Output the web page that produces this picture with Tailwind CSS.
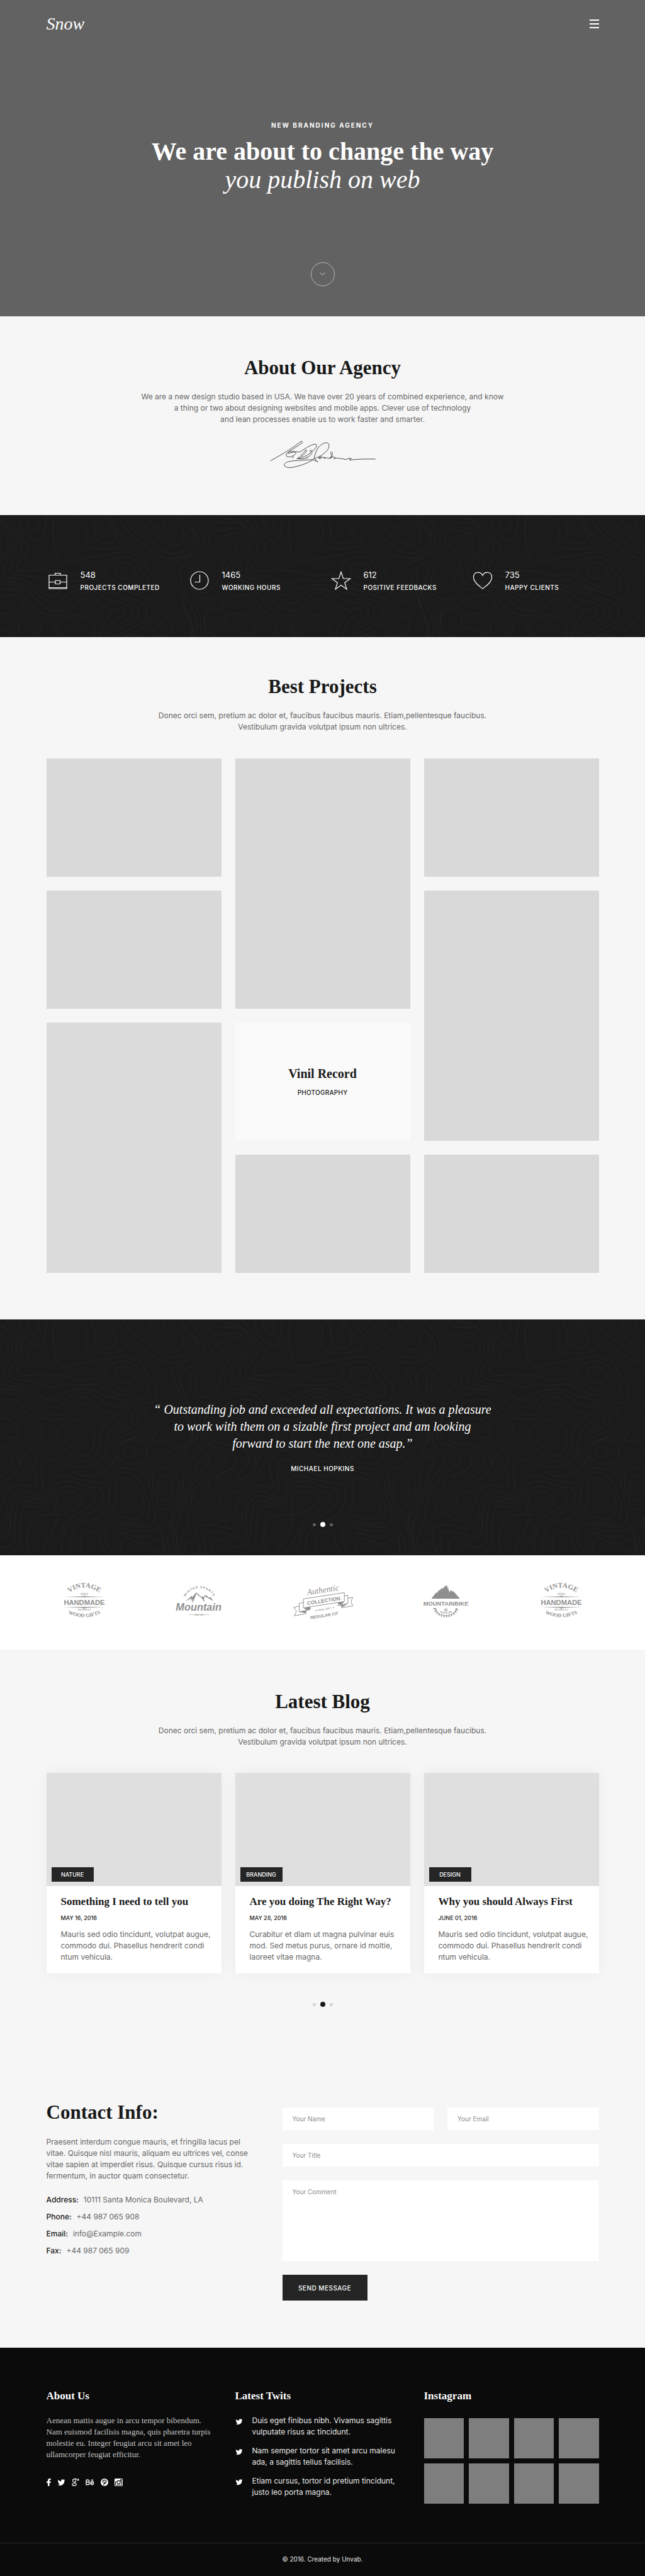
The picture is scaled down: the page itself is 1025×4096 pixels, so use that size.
<!DOCTYPE html>
<html lang="en">
<head>
<meta charset="utf-8">
<meta name="viewport" content="width=device-width, initial-scale=1">
<title>Snow – New Branding Agency</title>
<script src="https://cdn.jsdelivr.net/npm/@tailwindcss/browser@4"></script>
</head>
<body class="bg-[#f6f6f6] font-[Inter,sans-serif] text-xs leading-[18px] text-[#666]">

<!-- Contour-line texture and client logos shared by several sections -->
<svg class="absolute size-0" aria-hidden="true">
  <defs>
    <pattern id="topo" width="375" height="375" patternUnits="userSpaceOnUse" patternTransform="translate(188 0)">
      <g id="contours" transform="scale(.25)" fill="none" stroke="#262626" stroke-width="3"></g>
    </pattern>
    <symbol id="logo-handmade" viewBox="0 0 90 86">
      <path id="arc-top" d="M8 26Q45-4 82 26" fill="none"/>
      <path id="arc-bottom" d="M9 66Q45 83 81 66" fill="none"/>
      <g fill="#8f8f8f" text-anchor="middle" font-family="Liberation Serif, serif" font-weight="700">
        <text font-size="15"><textPath href="#arc-top" startOffset="50%">VINTAGE</textPath></text>
        <text x="45" y="27" font-size="5">· STYLE ·</text>
        <text x="45" y="48" font-size="15" font-family="Liberation Sans, sans-serif">HANDMADE</text>
        <text x="45" y="61" font-size="4">EST. 1978 U.S.A</text>
        <text font-size="11"><textPath href="#arc-bottom" startOffset="50%">WOOD GIFTS</textPath></text>
      </g>
      <path d="M1 31 45 30 89 31 45 32zM1 53.500 45 52.500 89 53.500 45 54.500z" fill="#8f8f8f"/>
      <path d="M41 30.500 45 28.500 49 30.500M41 54 45 56 49 54" fill="none" stroke="#8f8f8f"/>
    </symbol>
  </defs>
</svg>

<section class="bg-[#626262] px-[73px] pt-5 pb-12 text-white">
  <header class="mx-auto flex h-9 max-w-[878px] items-center justify-between">
    <a href="#" class="font-['Liberation_Serif',serif] text-[28px] leading-9 italic">Snow</a>
    <button type="button" aria-label="Menu" class="flex w-[15px] flex-col gap-1">
      <span class="h-0.5 bg-white"></span><span class="h-0.5 bg-white"></span><span class="h-0.5 bg-white"></span>
    </button>
  </header>
  <div class="mt-[135px] text-center">
    <p class="text-[10px] leading-4 font-bold tracking-[2px]">NEW BRANDING AGENCY</p>
    <h1 class="mt-[11px] font-['Liberation_Serif',serif] text-[40px] leading-[45px] font-bold">We are about to change the way<br><em class="font-normal">you publish on web</em></h1>
    <a href="#about" aria-label="Scroll down" class="mx-auto mt-[109px] flex size-[38px] items-center justify-center rounded-full border border-[#b5b5b5]">
      <svg class="h-[6px] w-[9px]" viewBox="0 0 9 6" fill="none" stroke="#ccc"><path d="M.5.5 4.500 4.500 8.500.5"/></svg>
    </a>
  </div>
</section>

<section id="about" class="px-[73px] pt-[62px] pb-[68px] text-center">
  <h2 class="font-['Liberation_Serif',serif] text-[31px] leading-10 font-bold text-[#191919]">About Our Agency</h2>
  <p class="mt-[17px]">We are a new design studio based in USA. We have over 20 years of combined experience, and know<br>a thing or two about designing websites and mobile apps. Clever use of technology<br>and lean processes enable us to work faster and smarter.</p>
  <svg class="mx-auto mt-[18px] h-[57px] w-[185px]" viewBox="0 0 738 228" fill="none" stroke="#111" stroke-width="3" stroke-linecap="round" stroke-linejoin="round">
    <path d="M40 154 96 122C150 90 195 60 228 35C246 22 242 42 230 48C190 78 152 92 140 112C130 134 160 134 184 122C212 106 200 96 176 101C158 104 150 112 150 104C150 92 186 94 222 100C260 78 300 46 326 50C344 56 320 84 290 106C268 124 240 136 206 142M184 128 178 138M262 86C244 110 226 130 212 138C240 150 280 140 304 104M264 88C280 84 254 112 236 128M296 84C282 92 292 102 304 90M274 130 268 138M338 162C324 152 310 148 290 148C240 152 150 152 132 170C110 192 150 206 200 192C250 180 290 162 316 140C322 100 340 60 376 44C420 26 416 70 396 92C370 118 346 132 318 140L338 162"/>
    <path d="M344 138C350 120 372 134 356 142C344 146 342 130 368 132L386 134 380 142C392 132 398 134 404 140C420 136 436 118 432 102C426 92 412 104 426 118C436 124 428 138 416 140C420 130 436 128 450 134L442 142C460 134 478 138 480 142L496 140C500 144 510 146 520 146C530 140 538 138 552 140L540 150C570 146 640 142 704 144"/>
  </svg>
</section>

<section class="relative bg-[#1b1b1b] px-[73px] pt-[85px] pb-[71px] text-white">
  <svg class="absolute inset-0 size-full" aria-hidden="true"><rect width="100%" height="100%" fill="url(#topo)"/></svg>
  <div class="relative mx-auto grid max-w-[878px] grid-cols-4 gap-[22px]">
    <div class="flex items-center gap-[18px]">
      <svg class="size-9 shrink-0" viewBox="0 0 36 36" fill="none" stroke="#fff" stroke-width="1.200"><path d="M4 9.500H32V31H4zM13.500 9.500V6.500H22V9.500M4 20.500H14M22 20.500H32M14 18H21.500V23.500H14zM4 29.500H32"/></svg>
      <div><p class="text-[13px] leading-5">548</p><p class="mt-0.5 text-[10px] leading-4 font-medium tracking-[0.5px] whitespace-nowrap">PROJECTS COMPLETED</p></div>
    </div>
    <div class="flex items-center gap-[18px]">
      <svg class="size-9 shrink-0" viewBox="0 0 36 36" fill="none" stroke="#fff" stroke-width="1.200"><circle cx="18" cy="18" r="14"/><path d="M18.500 9V20.500H10.500"/></svg>
      <div><p class="text-[13px] leading-5">1465</p><p class="mt-0.5 text-[10px] leading-4 font-medium tracking-[0.5px] whitespace-nowrap">WORKING HOURS</p></div>
    </div>
    <div class="flex items-center gap-[18px]">
      <svg class="size-9 shrink-0" viewBox="0 0 36 36" fill="none" stroke="#fff" stroke-width="1.200"><path d="M18 4.500 21.500 15H32.500L23.800 21.500 27 32 18 25.500 9 32 12.200 21.500 3.500 15H14.500z"/></svg>
      <div><p class="text-[13px] leading-5">612</p><p class="mt-0.5 text-[10px] leading-4 font-medium tracking-[0.5px] whitespace-nowrap">POSITIVE FEEDBACKS</p></div>
    </div>
    <div class="flex items-center gap-[18px]">
      <svg class="size-9 shrink-0" viewBox="0 0 36 36" fill="none" stroke="#fff" stroke-width="1.200"><path d="M18 31C13 27 3.500 21 3.500 12.500C3.500 4 14.500 2.500 18 10C21.500 2.500 32.500 4 32.500 12.500C32.500 21 23 27 18 31z"/></svg>
      <div><p class="text-[13px] leading-5">735</p><p class="mt-0.5 text-[10px] leading-4 font-medium tracking-[0.5px] whitespace-nowrap">HAPPY CLIENTS</p></div>
    </div>
  </div>
</section>

<section class="px-[73px] pt-[59px] pb-[74px] text-center">
  <h2 class="font-['Liberation_Serif',serif] text-[31px] leading-10 font-bold text-[#191919]">Best Projects</h2>
  <p class="mt-[17px]">Donec orci sem, pretium ac dolor et, faucibus faucibus mauris. Etiam,pellentesque faucibus.<br>Vestibulum gravida volutpat ipsum non ultrices.</p>
  <div class="mx-auto mt-[41px] grid max-w-[878px] grid-flow-col grid-cols-3 grid-rows-[repeat(4,188px)] gap-[22px]">
    <div class="bg-[#d9d9d9]"></div>
    <div class="bg-[#d9d9d9]"></div>
    <div class="row-span-2 bg-[#dbdbdb]"></div>
    <div class="row-span-2 bg-[#d9d9d9]"></div>
    <a href="#" class="flex flex-col items-center justify-center bg-[#fafafa] text-[#191919]">
      <h3 class="font-['Liberation_Serif',serif] text-xl leading-6 font-bold">Vinil Record</h3>
      <p class="mt-2.5 text-[10px] leading-4 font-medium tracking-wide">PHOTOGRAPHY</p>
    </a>
    <div class="bg-[#d9d9d9]"></div>
    <div class="bg-[#d9d9d9]"></div>
    <div class="row-span-2 bg-[#d9d9d9]"></div>
    <div class="bg-[#d9d9d9]"></div>
  </div>
</section>

<section class="relative bg-[#1b1b1b] px-[73px] pt-[130px] pb-[45px] text-center text-white">
  <svg class="absolute inset-0 size-full" aria-hidden="true"><rect width="100%" height="100%" fill="url(#topo)"/></svg>
  <div class="relative">
    <blockquote class="font-['Liberation_Serif',serif] text-xl leading-[27px] italic">“ Outstanding job and exceeded all expectations. It was a pleasure<br>to work with them on a sizable first project and am looking<br>forward to start the next one asap.”</blockquote>
    <p class="mt-[18px] text-[10px] leading-4 font-medium tracking-[0.5px]">MICHAEL HOPKINS</p>
    <div class="mt-[77px] flex items-center justify-center gap-[7px]">
      <button type="button" aria-label="Testimonial 1" class="size-[5px] rounded-full bg-[#606060]"></button>
      <button type="button" aria-label="Testimonial 2" class="size-2 rounded-full bg-white"></button>
      <button type="button" aria-label="Testimonial 3" class="size-[5px] rounded-full bg-[#606060]"></button>
    </div>
  </div>
</section>

<section class="bg-white px-[73px] py-[43px]">
  <div class="mx-auto flex max-w-[878px] items-center justify-between px-[26px]">
    <svg class="h-16 w-[68px]" viewBox="0 0 90 86" role="img" aria-label="Vintage Handmade"><use href="#logo-handmade"/></svg>
    <svg class="h-16 w-[76px]" viewBox="7 0 101 86" fill="#8f8f8f" role="img" aria-label="Mountain">
      <path id="arc-winter" d="M27 35A34 34 0 0 1 91 35" fill="none"/>
      <text font-family="Liberation Sans, sans-serif" font-weight="700" font-size="6.500" letter-spacing="1.500" text-anchor="middle"><textPath href="#arc-winter" startOffset="50%">WINTER SPORTS</textPath></text>
      <path d="M28 41 40 31 41 28 43 32 52 22 65 33 63 28 67 32 72 27 80 33 83 32 88 40 78 34 71 30 68 35 70 43 63 33 52 25 48 35 44 44 43 35 40 40 41 34z"/>
      <text x="57" y="61" font-family="Liberation Sans, sans-serif" font-weight="700" font-style="italic" font-size="22" text-anchor="middle">Mountain</text>
      <text x="58" y="71" font-family="Liberation Sans, sans-serif" font-weight="700" font-size="3.500" text-anchor="middle">SINCE 1914</text>
      <path d="M36 69H48V70H36zM68 69H80V70H68z" opacity=".6"/>
    </svg>
    <svg class="h-16 w-24 overflow-visible" viewBox="4 0 128 86" fill="#8f8f8f" role="img" aria-label="Authentic Collection">
      <g fill="#fff" stroke="#8f8f8f" stroke-width="1.300" stroke-linejoin="round">
        <path d="M17 51 6 53.500 12 62 7 71.500 32 67V50zM122 34 132 32 128 41 132 50.500 108 54V40z"/>
        <path d="M26 43 17.500 45V63L41 58V47zM114 29 121.500 27.500V45L101 50V42z"/>
        <path d="M26.500 35.500 114 22V41L26.500 54.500z"/>
      </g>
      <path d="M27 55 41 52.500V58L35 60zM18 63.500 32 60V66zM101 43 114 41 107 49 100 45zM108 49 121 46 108 54z"/>
      <g font-family="Liberation Sans, sans-serif" font-weight="700" text-anchor="middle">
        <text transform="translate(69 22) rotate(-8.500)" font-family="Liberation Serif, serif" font-weight="400" font-style="italic" font-size="18">Authentic</text>
        <text transform="translate(70.500 43) rotate(-8.500)" font-size="11">COLLECTION</text>
        <text transform="translate(72 59) rotate(-8.500)" font-family="Liberation Serif, serif" font-style="italic" font-size="6">Since 1937</text>
        <text transform="translate(71.500 74) rotate(-8.500)" font-size="9">REGULAR FIT</text>
      </g>
      <path d="M51 61.500 56 58 55 61zM89 53 94 55 90 55z"/>
    </svg>
    <svg class="h-16 w-[76px]" viewBox="3 0 101 86" fill="#8f8f8f" role="img" aria-label="Mountainbike">
      <path d="M22 35 32 22 34 23 38 16 39 18 44 12 45 14 53.600 6.500 60 13 66 18 70 20 76 27 83 35z"/>
      <path d="M54.500 9 58 14 61 22 63 16 69 22 64 15 60 13z" fill="#fff"/>
      <text x="53" y="50" font-family="Liberation Sans, sans-serif" font-weight="700" font-size="12.500" text-anchor="middle">MOUNTAINBIKE</text>
      <path d="M29 55A25 22 0 0 0 77 55L74 55A21 15 0 0 1 32 55z"/>
      <path d="M28 55A25.500 22 0 0 0 78 55" fill="none" stroke="#8f8f8f" stroke-width="4" stroke-dasharray="2.500 3"/>
      <circle cx="53" cy="59" r="2.500" fill="none" stroke="#8f8f8f" stroke-width="1.500"/>
      <path id="arc-adventure" d="M39 63Q53 71 67 63" fill="none"/>
      <text font-family="Liberation Sans, sans-serif" font-weight="700" font-size="4.500" text-anchor="middle"><textPath href="#arc-adventure" startOffset="50%">ADVENTURE</textPath></text>
    </svg>
    <svg class="h-16 w-[68px]" viewBox="0 0 90 86" role="img" aria-label="Vintage Handmade"><use href="#logo-handmade"/></svg>
  </div>
</section>

<section class="px-[73px] pt-[63px]">
  <div class="text-center">
    <h2 class="font-['Liberation_Serif',serif] text-[31px] leading-10 font-bold text-[#191919]">Latest Blog</h2>
    <p class="mt-[17px]">Donec orci sem, pretium ac dolor et, faucibus faucibus mauris. Etiam,pellentesque faucibus.<br>Vestibulum gravida volutpat ipsum non ultrices.</p>
  </div>
  <div class="mx-auto mt-10 grid max-w-[878px] grid-cols-3 gap-[22px]">
    <article class="bg-white shadow-[0_0_20px_rgba(0,0,0,0.05)]">
      <div class="flex h-[180px] items-end bg-[#dfdfdf] px-2 pb-[7px]"><a href="#" class="w-[67px] bg-[#252525] text-center text-[9px] leading-[23px] font-medium text-white">NATURE</a></div>
      <div class="px-[23px] pt-[13px] pb-[17px] whitespace-nowrap">
        <h3 class="font-['Liberation_Serif',serif] text-[17px] leading-6 font-bold text-[#191919]">Something I need to tell you</h3>
        <p class="mt-[7px] text-[9px] leading-[14px] font-medium text-[#191919]">MAY 16, 2016</p>
        <p class="mt-2.5">Mauris sed odio tincidunt, volutpat augue,<br>commodo dui. Phasellus hendrerit condi<br>ntum vehicula.</p>
      </div>
    </article>
    <article class="bg-white shadow-[0_0_20px_rgba(0,0,0,0.05)]">
      <div class="flex h-[180px] items-end bg-[#dfdfdf] px-2 pb-[7px]"><a href="#" class="w-[67px] bg-[#252525] text-center text-[9px] leading-[23px] font-medium text-white">BRANDING</a></div>
      <div class="px-[23px] pt-[13px] pb-[17px] whitespace-nowrap">
        <h3 class="font-['Liberation_Serif',serif] text-[17px] leading-6 font-bold text-[#191919]">Are you doing The Right Way?</h3>
        <p class="mt-[7px] text-[9px] leading-[14px] font-medium text-[#191919]">MAY 28, 2016</p>
        <p class="mt-2.5">Curabitur et diam ut magna pulvinar euis<br>mod. Sed metus purus, ornare id moltie,<br>laoreet vitae magna.</p>
      </div>
    </article>
    <article class="bg-white shadow-[0_0_20px_rgba(0,0,0,0.05)]">
      <div class="flex h-[180px] items-end bg-[#dfdfdf] px-2 pb-[7px]"><a href="#" class="w-[67px] bg-[#252525] text-center text-[9px] leading-[23px] font-medium text-white">DESIGN</a></div>
      <div class="px-[23px] pt-[13px] pb-[17px] whitespace-nowrap">
        <h3 class="font-['Liberation_Serif',serif] text-[17px] leading-6 font-bold text-[#191919]">Why you should Always First</h3>
        <p class="mt-[7px] text-[9px] leading-[14px] font-medium text-[#191919]">JUNE 01, 2016</p>
        <p class="mt-2.5">Mauris sed odio tincidunt, volutpat augue,<br>commodo dui. Phasellus hendrerit condi<br>ntum vehicula.</p>
      </div>
    </article>
  </div>
  <div class="mt-[45px] flex items-center justify-center gap-[7px]">
    <button type="button" aria-label="Blog page 1" class="size-[5px] rounded-full bg-[#d3d3d3]"></button>
    <button type="button" aria-label="Blog page 2" class="size-2 rounded-full bg-[#191919]"></button>
    <button type="button" aria-label="Blog page 3" class="size-[5px] rounded-full bg-[#d3d3d3]"></button>
  </div>
</section>

<section class="px-[73px] pt-[148px] pb-[75px]">
  <div class="mx-auto grid max-w-[878px] grid-cols-12 gap-[22px]">
    <div class="col-span-5">
      <h2 class="font-['Liberation_Serif',serif] text-[31px] leading-10 font-bold text-[#191919]">Contact Info:</h2>
      <p class="mt-[18px] whitespace-nowrap">Praesent interdum congue mauris, et fringilla lacus pel<br>vitae. Quisque nisl mauris, aliquam eu ultrices vel, conse<br>vitae sapien at imperdiet risus. Quisque cursus risus id.<br>fermentum, in auctor quam consectetur.</p>
      <dl class="mt-5 flex flex-col gap-[9px]">
        <div class="flex gap-2"><dt class="font-medium text-[#191919]">Address:</dt><dd>10111 Santa Monica Boulevard, LA</dd></div>
        <div class="flex gap-2"><dt class="font-medium text-[#191919]">Phone:</dt><dd>+44 987 065 908</dd></div>
        <div class="flex gap-2"><dt class="font-medium text-[#191919]">Email:</dt><dd>info@Example.com</dd></div>
        <div class="flex gap-2"><dt class="font-medium text-[#191919]">Fax:</dt><dd>+44 987 065 909</dd></div>
      </dl>
    </div>
    <form class="col-span-7 grid grid-cols-2 gap-[22px] pt-3 text-[10px] text-[#555]">
      <input type="text" aria-label="Your Name" placeholder="Your Name" class="h-9 w-full bg-white px-4 placeholder:text-[#8c8c8c]">
      <input type="email" aria-label="Your Email" placeholder="Your Email" class="h-9 w-full bg-white px-4 placeholder:text-[#8c8c8c]">
      <input type="text" aria-label="Your Title" placeholder="Your Title" class="col-span-2 h-9 w-full bg-white px-4 placeholder:text-[#8c8c8c]">
      <textarea aria-label="Your Comment" placeholder="Your Comment" class="col-span-2 h-32 w-full resize-none bg-white px-4 py-[9px] placeholder:text-[#8c8c8c]"></textarea>
      <div class="col-span-2"><button type="submit" class="block h-[41px] w-[135px] bg-[#252525] text-[10px] font-medium tracking-[0.5px] text-white">SEND MESSAGE</button></div>
    </form>
  </div>
</section>

<footer class="bg-[#0b0b0b] text-[#e8e8e8]">
  <div class="px-[73px] pt-[65px] pb-[62px]">
    <div class="mx-auto grid max-w-[878px] grid-cols-3 gap-[22px]">
      <div>
        <h3 class="font-['Liberation_Serif',serif] text-[17px] leading-6 font-bold text-white">About Us</h3>
        <p class="mt-[18px] font-['Liberation_Serif',serif] text-[13px] whitespace-nowrap text-[#c4c4c4]">Aenean mattis augue in arcu tempor bibendum.<br>Nam euismod facilisis magna, quis pharetra turpis<br>molestie eu. Integer feugiat arcu sit amet leo<br>ullamcorper feugiat efficitur.</p>
        <div class="mt-[29px] flex items-center gap-2.5 text-white">
          <a href="#" aria-label="Facebook"><svg class="h-3 w-[7px]" viewBox="0 0 7 12" fill="currentColor"><path d="M2 12V7H0V4.500H2V3C2 1 3.200 0 5 0H6.800V2.300H5.500C4.700 2.300 4.500 2.700 4.500 3.300V4.500H6.800L6.400 7H4.500V12z"/></svg></a>
          <a href="#" aria-label="Twitter"><svg class="h-3 w-[13px]" viewBox="0 0 24 24" fill="currentColor"><path d="M23.600 5a10 10 0 0 1-2.700.8 4.800 4.800 0 0 0 2.100-2.600c-.9.500-2 1-3.100 1.200a4.800 4.800 0 0 0-8.300 4.400C7.700 8.600 4.200 6.700 1.800 3.800a4.900 4.900 0 0 0 1.500 6.500c-.8 0-1.500-.2-2.200-.6 0 2.400 1.600 4.400 3.900 4.900-.7.200-1.500.2-2.200.1.600 1.900 2.400 3.300 4.500 3.400A9.800 9.800 0 0 1 .2 20.100a13.800 13.800 0 0 0 21.200-12.200c1-.7 1.700-1.600 2.200-2.900z"/></svg></a>
          <a href="#" aria-label="Google Plus"><svg class="h-3 w-3" viewBox="0 0 12 12" fill="none" stroke="currentColor" stroke-width="1.100"><path d="M8 .6H4.500C2.800.6 1.600 1.800 1.600 3.300C1.600 4.800 2.600 5.700 4 5.700C5.600 5.700 6.400 4.600 6.400 3.200C6.400 1.800 5.400 1 4.800.7M4.500 5.800C4 6.600 7.300 7.100 7.300 9.100C7.300 10.600 6 11.400 4 11.400C2 11.400.8 10.600.8 9.400C.8 8 2.500 7.400 4.800 7.500M10 0V4M8 2H12"/></svg></a>
          <a href="#" aria-label="Behance"><svg class="h-3 w-[14px]" viewBox="0 0 14 12" fill="none" stroke="currentColor" stroke-width="1.400"><path d="M1 2.200H4C6.300 2.200 6.300 5.800 4 5.800H1M4 5.800C6.900 5.800 6.900 9.800 4 9.800H1V2.200M8.200 7.400H12.600C12.600 3.800 8.200 3.800 8.200 7.300C8.200 10.500 12 10.600 12.700 8.600M8.700 2.500H12.200"/></svg></a>
          <a href="#" aria-label="Pinterest"><svg class="h-3 w-3" viewBox="0 0 12 12"><circle cx="6" cy="6" r="6" fill="currentColor"/><path d="M4.700 10.800 6.100 5M3.800 6.600C2.300 3.800 4 2.300 6.100 2.300C8.100 2.300 9 3.600 8.700 5.300C8.400 7.400 6.500 8.200 5.600 7" fill="none" stroke="#0b0b0b" stroke-width="1.200"/></svg></a>
          <a href="#" aria-label="Instagram"><svg class="h-3 w-[13px]" viewBox="0 0 13 12"><rect width="13" height="12" rx="1.500" fill="currentColor"/><path d="M1.500 5H3.500M9.500 5H11.500V10.500H1.500V5M9.500 1.500H11.500V3.500H9.500z" fill="none" stroke="#0b0b0b"/><circle cx="6.500" cy="6" r="2.600" fill="none" stroke="#0b0b0b" stroke-width="1.100"/></svg></a>
        </div>
      </div>
      <div>
        <h3 class="font-['Liberation_Serif',serif] text-[17px] leading-6 font-bold text-white">Latest Twits</h3>
        <ul class="mt-[18px] flex flex-col gap-3 whitespace-nowrap">
          <li class="flex gap-[15px]"><svg class="mt-[5px] h-[11px] w-3 text-white" viewBox="0 0 24 24" fill="currentColor"><path d="M23.600 5a10 10 0 0 1-2.700.8 4.800 4.800 0 0 0 2.100-2.600c-.9.500-2 1-3.100 1.200a4.800 4.800 0 0 0-8.300 4.400C7.700 8.600 4.200 6.700 1.800 3.800a4.900 4.900 0 0 0 1.500 6.500c-.8 0-1.500-.2-2.200-.6 0 2.400 1.600 4.400 3.900 4.900-.7.200-1.500.2-2.200.1.600 1.900 2.400 3.300 4.500 3.400A9.800 9.800 0 0 1 .2 20.100a13.800 13.800 0 0 0 21.200-12.200c1-.7 1.700-1.600 2.200-2.900z"/></svg><p>Duis eget finibus nibh. Vivamus sagittis<br>vulputate risus ac tincidunt.</p></li>
          <li class="flex gap-[15px]"><svg class="mt-[5px] h-[11px] w-3 text-white" viewBox="0 0 24 24" fill="currentColor"><path d="M23.600 5a10 10 0 0 1-2.700.8 4.800 4.800 0 0 0 2.100-2.600c-.9.500-2 1-3.100 1.200a4.800 4.800 0 0 0-8.300 4.400C7.700 8.600 4.200 6.700 1.800 3.800a4.900 4.900 0 0 0 1.500 6.500c-.8 0-1.500-.2-2.200-.6 0 2.400 1.600 4.400 3.900 4.900-.7.200-1.500.2-2.200.1.600 1.900 2.400 3.300 4.500 3.400A9.800 9.800 0 0 1 .2 20.100a13.800 13.800 0 0 0 21.200-12.200c1-.7 1.700-1.600 2.200-2.900z"/></svg><p>Nam semper tortor sit amet arcu malesu<br>ada, a sagittis tellus facilisis.</p></li>
          <li class="flex gap-[15px]"><svg class="mt-[5px] h-[11px] w-3 text-white" viewBox="0 0 24 24" fill="currentColor"><path d="M23.600 5a10 10 0 0 1-2.700.8 4.800 4.800 0 0 0 2.100-2.600c-.9.500-2 1-3.100 1.200a4.800 4.800 0 0 0-8.300 4.400C7.700 8.600 4.200 6.700 1.800 3.800a4.900 4.900 0 0 0 1.500 6.500c-.8 0-1.500-.2-2.200-.6 0 2.400 1.600 4.400 3.900 4.900-.7.200-1.500.2-2.200.1.600 1.900 2.400 3.300 4.500 3.400A9.800 9.800 0 0 1 .2 20.100a13.800 13.800 0 0 0 21.200-12.200c1-.7 1.700-1.600 2.200-2.900z"/></svg><p>Etiam cursus, tortor id pretium tincidunt,<br>justo leo porta magna.</p></li>
        </ul>
      </div>
      <div>
        <h3 class="font-['Liberation_Serif',serif] text-[17px] leading-6 font-bold text-white">Instagram</h3>
        <div class="mt-[23px] grid auto-rows-[64px] grid-cols-4 gap-2">
          <a href="#" aria-label="Photo 1" class="bg-[#7e7e7e]"></a><a href="#" aria-label="Photo 2" class="bg-[#7e7e7e]"></a><a href="#" aria-label="Photo 3" class="bg-[#7e7e7e]"></a><a href="#" aria-label="Photo 4" class="bg-[#7e7e7e]"></a>
          <a href="#" aria-label="Photo 5" class="bg-[#7e7e7e]"></a><a href="#" aria-label="Photo 6" class="bg-[#7e7e7e]"></a><a href="#" aria-label="Photo 7" class="bg-[#7e7e7e]"></a><a href="#" aria-label="Photo 8" class="bg-[#7e7e7e]"></a>
        </div>
      </div>
    </div>
  </div>
  <p class="border-t border-[#262626] pt-[17px] pb-[19px] text-center text-[10px] leading-4">© 2016. Created by Unvab.</p>
</footer>

<script>
// Contour lines as x,y runs on a 1500-unit tile; each run is smoothed into a curve.
const contours = [
  '205,0 200,30 225,65 265,76 290,60 285,20 270,0',
  '75,0 140,55 200,95 270,150 350,192 400,180 418,140 400,80 350,30 330,0',
  '20,0 90,90 150,130 230,180 290,230 360,243 440,220 485,170 475,110 420,60 375,0',
  '0,20 60,100 120,160 200,215 260,255 330,275 420,262 490,220 510,160 480,100 425,40 400,0',
  '430,0 500,75 545,150 530,210 470,255 380,295 332,325 360,380 375,440 410,530 425,620 470,720 440,820 430,860 485,880 500,920 470,1000 420,1120 380,1220 325,1290 350,1400 360,1500',
  '450,0 530,80 575,150 560,220 500,280 405,330 395,400 420,480 455,560 500,680 500,780 560,860 580,900 520,980 460,1070 430,1160 400,1240 370,1330 375,1500',
  '640,0 690,25 760,30 800,80 850,150 845,210 800,270 770,350 800,390 880,410 950,440 1010,490 1080,512 1150,470 1250,443 1340,450 1420,490 1500,500',
  '590,0 620,40 700,50 760,45 820,80 880,170 880,220 830,290 810,350 850,380 940,390 1010,410 1070,432 1150,413 1250,420 1340,413 1400,430 1500,480',
  '780,0 850,70 890,150 935,205 900,270 855,320 870,352 930,358 1000,347 1080,354 1170,362 1260,388 1360,375 1420,410 1500,470',
  '575,60 620,98 700,90 760,88 810,140 825,200 780,260 730,330 725,390 770,415 850,430 920,455 980,500 1060,550 1120,560 1180,500 1260,468 1340,480 1420,530 1500,560',
  '700,120 760,118 800,170 780,230 700,320 680,390 710,435 790,442 880,455 940,500 1010,570 1080,605 1150,600 1210,520 1280,492 1340,520 1400,580 1500,610',
  '740,157 760,190 730,240 680,290 650,380 610,450 545,495 500,470 488,410 520,330 600,260 680,190 740,157',
  '700,120 620,170 570,240 480,330 455,400 470,470 520,520 580,535 640,520 700,480 800,470 880,490 930,550 1000,620 1100,636 1180,620 1230,560 1280,528 1330,560',
  '640,600 690,540 780,510 860,520 900,580 970,640 1010,720 940,820 880,900 845,980 790,1015 755,1000 790,960 830,900 810,840 760,810 660,790 570,740 550,660 590,590 640,600',
  '690,640 780,628 860,680 862,740 820,752 740,720 690,700 690,640',
  '860,0 880,70 920,130 1000,165 1030,120 1040,40 1050,0',
  '915,0 930,60 965,100 990,70 990,0',
  '1105,0 1085,60 1088,150 1100,230 1130,285 1180,298 1260,280 1400,255 1500,238',
  '1230,0 1290,50 1300,110 1295,170 1330,208 1420,215 1500,205',
  '1320,0 1350,60 1350,130 1380,170 1440,180 1480,160 1480,110 1420,30 1410,0',
  '1430,0 1500,110 1545,160 1540,190 1500,203','-70,0 0,110 45,160 40,190 0,203',
  '1500,270 1440,290 1418,335 1440,390 1500,435','1500,305 1480,330 1482,370 1500,390',
  '0,238 60,236 130,265 165,310 200,370 245,430 235,500 200,532 130,510 60,485 0,475',
  '0,270 60,268 110,295 140,350 190,420 190,475 150,492 80,465 0,435',
  '0,305 50,303 90,320 104,360 80,400 30,400 0,388',
  '0,505 80,530 150,560 180,620 160,670 100,715 40,740 0,765',
  '0,528 70,550 120,590 125,640 80,690 30,710 0,730',
  '0,548 50,570 88,600 80,650 40,680 0,700',
  '0,590 35,600 45,620 20,650 0,660',
  '0,800 20,780 75,765 140,778 180,805 175,880 140,910 80,920 20,900 0,870',
  '70,815 100,835 98,868 70,880 38,860 42,825 70,815',
  '350,655 320,643 280,670 220,750 225,772 290,770 340,730 350,680 350,655',
  '300,590 240,650 150,720 60,770 0,800','350,540 290,560 200,650 140,715',
  '0,940 80,950 140,965 190,1020 205,1110 235,1230 210,1310 150,1320 0,1300',
  '0,965 80,985 140,1030 170,1100 200,1200 180,1280 140,1300 60,1295 0,1280',
  '0,1012 60,1013 110,1050 150,1110 167,1190 140,1255 90,1270 0,1248',
  '265,942 220,970 220,1040 240,1130 260,1190 290,1212 340,1180 380,1110 385,1030 350,970 265,942',
  '290,995 330,1005 352,1060 340,1120 300,1150 265,1125 250,1060 265,1010 290,995',
  '400,530 440,620 480,760 450,780 300,860 330,910 400,970 415,1020 405,1100 360,1210 345,1300 380,1420 385,1500',
  '480,560 520,640 530,760 620,820 680,880 640,930 550,1010 480,1090 460,1180 440,1290 400,1390 410,1500',
  '560,600 545,680 560,770 680,830 745,880 720,950 600,1010 575,1070 640,1110 650,1150 600,1205 585,1230 640,1275 700,1280 750,1220 770,1140 830,1070 910,1055 975,1070 980,1030 960,950 985,880 1040,830 1100,850 1180,920 1260,935 1340,930 1420,850 1500,760',
  '720,780 850,850 880,930 900,970 830,1050 740,1098 670,1070 635,1020 660,980 740,940',
  '535,1140 515,1160 520,1190 545,1232 562,1220 550,1165 535,1140',
  '500,1345 520,1315 600,1305 680,1325 740,1330 785,1270 800,1180 850,1105 910,1095 990,1117 1022,1070 1010,980 1030,910 1080,895 1160,930 1260,990 1360,985 1450,930 1500,850',
  '500,1345 500,1400 540,1500','550,1500 550,1380 580,1350 680,1360 760,1395 810,1350 815,1220 850,1140 900,1122 990,1142 1050,1110 1080,1020 1140,995 1240,1015 1340,1035 1420,1050 1445,1120 1420,1210 1350,1270 1270,1290 1200,1380 1195,1500',
  '610,1500 600,1420 640,1395 700,1425 760,1448 830,1420 845,1260 880,1158 980,1170 1060,1130 1100,1050 1190,1030 1300,1060 1390,1080 1400,1150 1340,1220 1250,1270 1180,1310 1150,1400 1130,1500',
  '810,1500 870,1410 880,1270 910,1190 1000,1190 1080,1130 1130,1070 1210,1065 1330,1110 1340,1160 1270,1220 1180,1270 1130,1380 1060,1500',
  '1175,1095 1120,1120 1105,1180 1102,1240 1180,1225 1260,1175 1270,1140 1230,1105 1175,1095',
  '950,1500 920,1420 940,1300 980,1255 1100,1245 1095,1320 1050,1400 1000,1500',
  '1280,1500 1255,1420 1280,1360 1330,1345 1370,1380 1390,1450 1420,1500',
  '1500,1010 1488,1060 1490,1150 1470,1210 1500,1250','1500,1300 1440,1320 1420,1380 1440,1450 1480,1500',
  '0,1325 80,1340 150,1345 210,1340 260,1325 300,1370 320,1440 330,1500',
  '0,1355 60,1365 120,1385 190,1385 240,1350 275,1360 300,1500',
  '20,1500 15,1430 50,1392 110,1415 180,1430 240,1398 280,1420 290,1500',
  '200,1500 250,1460 270,1500','430,1500 425,1440 460,1415 510,1450 520,1500','470,1500 480,1475 500,1500',
  '1110,720 1120,690 1180,650 1260,640 1340,690 1345,780 1320,860 1260,860 1190,800 1110,720',
  '1080,680 1130,780 1230,890 1320,900 1380,820 1400,700 1500,590',
  '1500,640 1440,720 1420,830 1460,900 1500,870'
];
const smooth = run => {
  const p = run.split(' ').map(s => s.split(',').map(Number));
  const closed = p[0][0] === p.at(-1)[0] && p[0][1] === p.at(-1)[1];
  let d = 'M' + p[0];
  for (let i = 0; i < p.length - 1; i++) {
    const a = p[i - 1] || (closed ? p.at(-2) : p[i]), b = p[i], c = p[i + 1], e = p[i + 2] || (closed ? p[1] : c);
    d += `C${b[0] + (c[0] - a[0]) / 6},${b[1] + (c[1] - a[1]) / 6} ${c[0] - (e[0] - b[0]) / 6},${c[1] - (e[1] - b[1]) / 6} ${c}`;
  }
  return d;
};
for (const run of contours) {
  const path = document.createElementNS('http://www.w3.org/2000/svg', 'path');
  path.setAttribute('d', smooth(run));
  document.getElementById('contours').append(path);
}
</script>
</body>
</html>
